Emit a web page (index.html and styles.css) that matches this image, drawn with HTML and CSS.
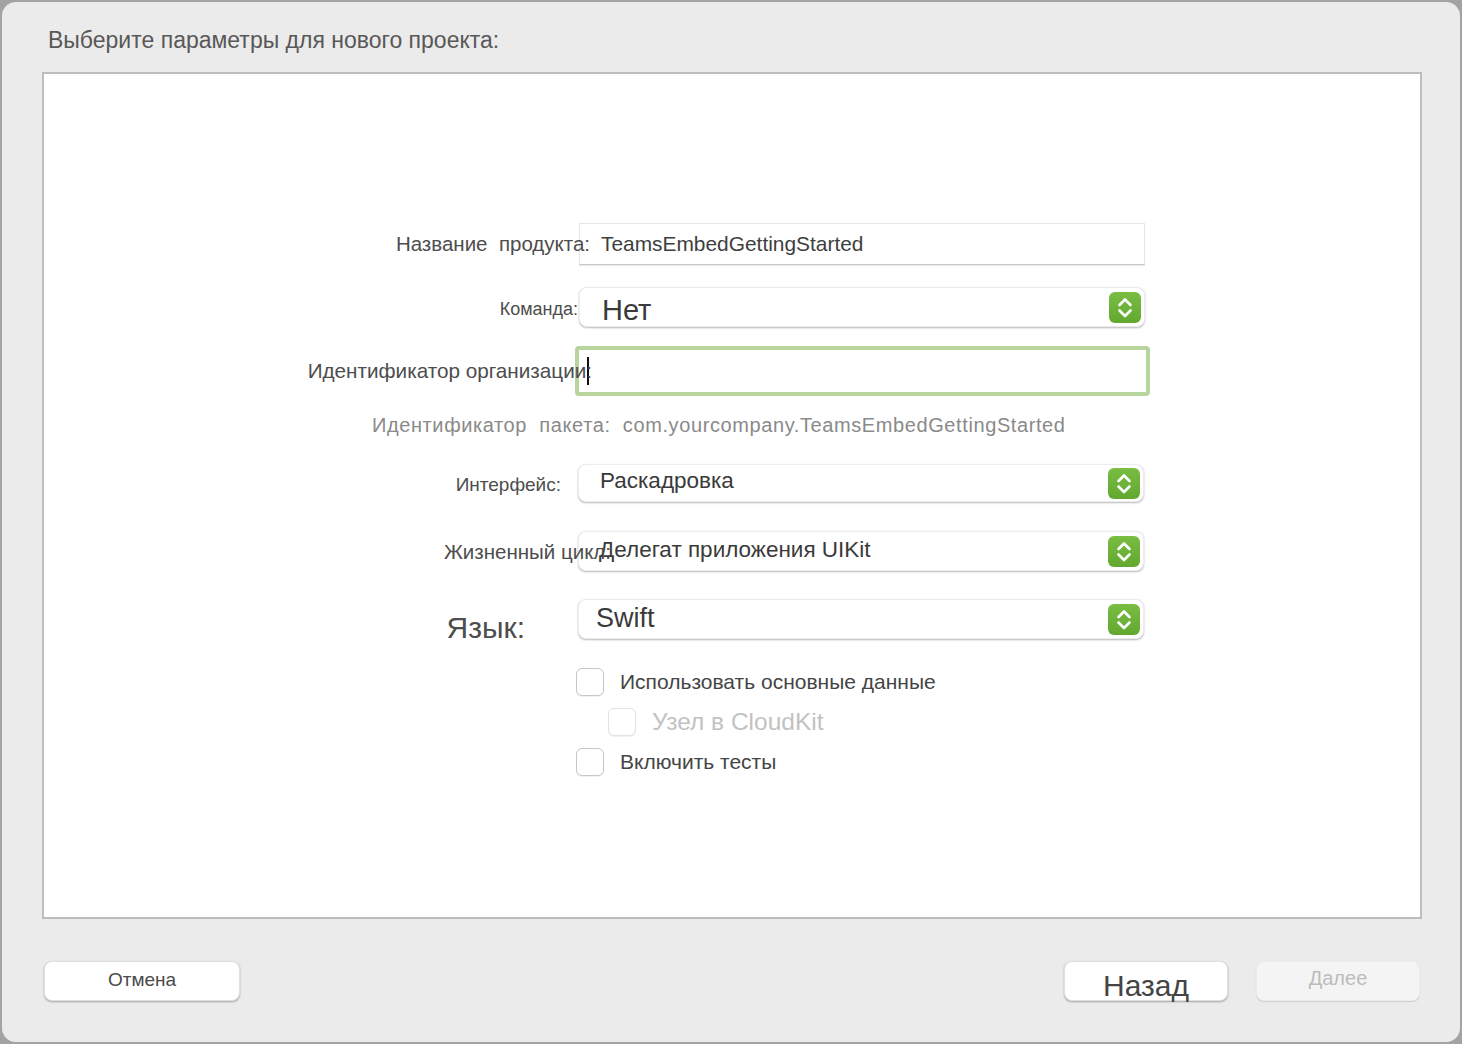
FILE: index.html
```html
<!DOCTYPE html>
<html lang="ru">
<head>
<meta charset="utf-8">
<title>Параметры нового проекта</title>
<link rel="stylesheet" href="styles.css">
</head>
<body>
<div class="window">
  <h1 class="title">Выберите параметры для нового проекта:</h1>
  <div class="panel">
    <div class="form">
      <div class="row r1">
        <span class="label l1">Название&nbsp; продукта:</span>
        <div class="textfield"><span class="tf-value">TeamsEmbedGettingStarted</span></div>
      </div>
      <div class="row r2">
        <span class="label l2">Команда:</span>
        <div class="popup"><span class="pv pv-team">Нет</span><span class="stepper"><svg viewBox="0 0 32 31" width="32" height="31"><path d="M10.5 13 L16 7.5 L21.5 13 M10.5 18.5 L16 24 L21.5 18.5" fill="none" stroke="#fff" stroke-width="2.6" stroke-linecap="round" stroke-linejoin="round"/></svg></span></div>
      </div>
      <div class="row r3">
        <span class="label l3">Идентификатор организации:</span>
        <div class="focusfield"><span class="caret"></span></div>
      </div>
      <div class="row r4">
        <span class="bundle">Идентификатор&nbsp; пакета:&nbsp; com.yourcompany.TeamsEmbedGettingStarted</span>
      </div>
      <div class="row r5">
        <span class="label l5">Интерфейс:</span>
        <div class="popup p5"><span class="pv pv-iface">Раскадровка</span><span class="stepper"><svg viewBox="0 0 32 31" width="32" height="31"><path d="M10.5 13 L16 7.5 L21.5 13 M10.5 18.5 L16 24 L21.5 18.5" fill="none" stroke="#fff" stroke-width="2.6" stroke-linecap="round" stroke-linejoin="round"/></svg></span></div>
      </div>
      <div class="row r6">
        <span class="label l6">Жизненный цикл:</span>
        <div class="popup p6"><span class="pv pv-life">Делегат приложения UIKit</span><span class="stepper"><svg viewBox="0 0 32 31" width="32" height="31"><path d="M10.5 13 L16 7.5 L21.5 13 M10.5 18.5 L16 24 L21.5 18.5" fill="none" stroke="#fff" stroke-width="2.6" stroke-linecap="round" stroke-linejoin="round"/></svg></span></div>
      </div>
      <div class="row r7">
        <span class="label l7">Язык:</span>
        <div class="popup p7"><span class="pv pv-lang">Swift</span><span class="stepper"><svg viewBox="0 0 32 31" width="32" height="31"><path d="M10.5 13 L16 7.5 L21.5 13 M10.5 18.5 L16 24 L21.5 18.5" fill="none" stroke="#fff" stroke-width="2.6" stroke-linecap="round" stroke-linejoin="round"/></svg></span></div>
      </div>
      <div class="check c1">
        <span class="box"></span><span class="check-label">Использовать основные данные</span>
      </div>
      <div class="check c2 disabled">
        <span class="box"></span><span class="check-label">Узел в CloudKit</span>
      </div>
      <div class="check c3">
        <span class="box"></span><span class="check-label">Включить тесты</span>
      </div>
    </div>
  </div>
  <div class="buttons">
    <button class="btn btn-cancel">Отмена</button>
    <span class="spacer"></span>
    <button class="btn btn-back">Назад</button>
    <button class="btn btn-next" disabled>Далее</button>
  </div>
</div>
</body>
</html>
```

FILE: styles.css
```css
html, body {
  margin: 0;
  padding: 0;
}
body {
  background: #a3a3a3;
  font-family: "Liberation Sans", Arial, sans-serif;
  color: #555;
  width: 1462px;
  height: 1044px;
  overflow: hidden;
}
.window {
  box-sizing: border-box;
  margin: 2px 2px 0 2px;
  width: 1458px;
  height: 1040px;
  background: #ebebeb;
  border-radius: 14px;
  display: flex;
  flex-direction: column;
}
.title {
  margin: 0;
  padding: 25px 0 0 46px;
  font-size: 23px;
  line-height: 26px;
  font-weight: normal;
  color: #585858;
}
.panel {
  box-sizing: border-box;
  margin: 19px 0 0 40px;
  width: 1380px;
  height: 847px;
  background: #fff;
  border: 2px solid #bdbdbd;
  padding-top: 149px;
}
.form {
  display: flex;
  flex-direction: column;
}
.row {
  display: flex;
  align-items: center;
}
.label {
  --o: 0px;
  position: relative;
  z-index: 1;
  box-sizing: border-box;
  width: calc(534px + var(--o));
  margin-right: calc(-1 * var(--o));
  text-align: right;
  white-space: nowrap;
  color: #4d4d4d;
  font-size: 19px;
}
.l1 { --o: 12px; font-size: 20.5px; }
.l2 { --o: 0px; font-size: 18px; padding-top: 4px; }
.l3 { --o: 14px; font-size: 20.7px; }
.l5 { --o: -17px; font-size: 19px; padding-top: 4px; }
.l6 { --o: 33px; font-size: 20.5px; padding-top: 2px; }
.l7 { --o: -53px; font-size: 30px; line-height: 34px; padding-top: 12px; }

.textfield {
  box-sizing: border-box;
  margin-left: 1px;
  width: 566px;
  height: 42px;
  background: #fff;
  border: 1px solid #e6e6e6;
  border-bottom: 1px solid #c9c9c9;
  box-shadow: 0 1px 1px rgba(0,0,0,0.08);
  display: flex;
  align-items: center;
  padding-left: 21px;
}
.tf-value {
  font-size: 20.9px;
  color: #3e3e3e;
}
.r2 { margin-top: 22px; }
.popup {
  box-sizing: border-box;
  margin-left: 1px;
  width: 566px;
  height: 40px;
  background: #fff;
  border: 1px solid #ececec;
  border-radius: 8px;
  box-shadow: 0 1px 2px rgba(0,0,0,0.28);
  display: flex;
  align-items: center;
  padding-right: 3px;
}
.pv {
  color: #3a3a3a;
  white-space: nowrap;
}
.pv-team { font-size: 29px; padding-left: 22px; padding-top: 7px; }
.pv-iface { font-size: 22.5px; padding-left: 21px; padding-bottom: 5px; }
.pv-life { font-size: 22.5px; padding-left: 20px; padding-bottom: 2px; }
.pv-lang { font-size: 27px; padding-left: 17px; padding-bottom: 2px; }
.stepper {
  margin-left: auto;
  width: 32px;
  height: 31px;
  border-radius: 6px;
  background: linear-gradient(#79bd43, #62a82f);
  display: flex;
}
.r3 { margin-top: 19px; }
.focusfield {
  box-sizing: border-box;
  margin-left: -3px;
  width: 575px;
  height: 50px;
  border: 4px solid #b7d59c;
  border-radius: 4px;
  background: #fff;
  display: flex;
  align-items: center;
  padding-left: 8px;
}
.caret {
  width: 2px;
  height: 28px;
  background: #111;
}
.r4 { margin-top: 17px; padding-left: 328px; }
.bundle {
  font-size: 20px;
  letter-spacing: 0.6px;
  color: #8a8a8a;
  white-space: nowrap;
  line-height: 24px;
}
.r5 { margin-top: 27px; }
.p5 { margin-left: 0; height: 38px; }
.r6 { margin-top: 29px; }
.p6 { margin-left: 0; }
.r7 { margin-top: 28px; align-items: flex-start; }
.p7 { margin-left: 0; }

.check {
  display: flex;
  align-items: center;
  padding-left: 532px;
}
.c1 { margin-top: 23px; }
.c2 { margin-top: 12px; padding-left: 564px; }
.c3 { margin-top: 12px; }
.box {
  box-sizing: border-box;
  width: 28px;
  height: 28px;
  border: 1px solid #c6c6c6;
  border-radius: 6px;
  background: #fff;
  box-shadow: 0 1px 1px rgba(0,0,0,0.06);
}
.check-label {
  margin-left: 16px;
  font-size: 21px;
  color: #454545;
}
.disabled .box { border-color: #e2e2e2; }
.disabled .check-label { color: #c2c2c2; font-size: 24.5px; }

.buttons {
  display: flex;
  align-items: flex-start;
  margin-top: 42px;
  padding: 0 40px 0 42px;
}
.spacer { flex: 1; }
.btn {
  box-sizing: border-box;
  height: 40px;
  border: 1px solid #e0e0e0;
  border-radius: 8px;
  background: #fff;
  box-shadow: 0 1px 2px rgba(0,0,0,0.3);
  font-family: "Liberation Sans", Arial, sans-serif;
  color: #4a4a4a;
  padding: 0;
  display: flex;
  align-items: center;
  justify-content: center;
  overflow: visible;
}
.btn-cancel { width: 196px; font-size: 19px; padding-bottom: 3px; }
.btn-back { width: 164px; font-size: 30px; padding-top: 10px; line-height: 30px; color: #444; }
.btn-next {
  margin-left: 28px;
  width: 164px;
  font-size: 20px;
  background: #f4f4f4;
  color: #bcbcbc;
  border-color: #ececec;
  box-shadow: 0 1px 1px rgba(0,0,0,0.12);
  padding-bottom: 6px;
}
```
